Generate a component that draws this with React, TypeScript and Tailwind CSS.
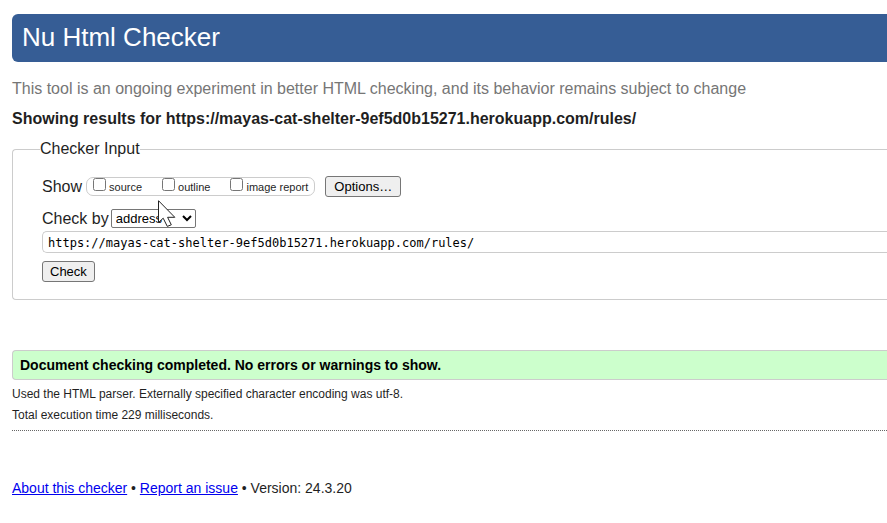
import { useState } from "react";

const REPORTS = [
  { id: "source", label: "source" },
  { id: "outline", label: "outline" },
  { id: "imagereport", label: "image report" },
];

const BUTTON =
  "h-[21px] rounded-[3px] border border-[#767676] bg-[#efefef] px-[7px] text-[13px] leading-[19px] text-black";

function Pointer() {
  return (
    <svg
      className="pointer-events-none absolute -top-[9px] left-[47px]"
      width="18"
      height="28"
      viewBox="0 0 18 28"
      aria-hidden="true"
    >
      <path
        d="M0.5 0.7V22.5L5.2 18.2L9.3 26.4L13.3 24.8L9.6 17.3H16.8Z"
        fill="#fff"
        stroke="#222"
        strokeWidth="1"
      />
    </svg>
  );
}

function CheckerForm() {
  const [address, setAddress] = useState("https://mayas-cat-shelter-9ef5d0b15271.herokuapp.com/rules/");
  return (
    <form onSubmit={(event) => event.preventDefault()}>
      <fieldset className="mt-2.5 rounded-l-[4px] border border-r-0 border-[#ccc] pb-[17px] pl-[29px]">
        <legend className="-ml-[2px] text-[16px] leading-[20px]">Checker Input</legend>
        <div className="mt-[17px] flex h-[21px] items-center">
          <span className="mr-1 text-[16px] leading-[20px]">Show</span>
          <div className="mr-2.5 flex h-[19px] gap-5 rounded-[7px] border border-[#ccc] pr-[6px] pl-[6px]">
            {REPORTS.map(({ id, label }) => (
              <div key={id} className="flex gap-[3px]">
                <input type="checkbox" id={id} className="size-[13px]" />
                <label htmlFor={id} className="text-[11px] leading-[18px]">
                  {label}
                </label>
              </div>
            ))}
          </div>
          <button type="button" className={`${BUTTON} min-w-[76px]`}>
            Options…
          </button>
        </div>
        <div className="mt-3 flex h-[19px] items-center">
          <label htmlFor="docselect" className="mr-[2px] text-[16px] leading-[20px]">
            Check by
          </label>
          <div className="relative">
            <select
              id="docselect"
              defaultValue="address"
              className="block h-[19px] w-[85px] rounded-[2px] border border-[#767676] bg-white text-[13px] leading-[17px] text-black"
            >
              <option value="address">address</option>
              <option value="file">file upload</option>
              <option value="textarea">text input</option>
            </select>
            <Pointer />
          </div>
        </div>
        <input
          type="url"
          aria-label="Address"
          value={address}
          onChange={(event) => setAddress(event.target.value)}
          className="mt-[3px] block h-[22px] w-full rounded-l-[5px] border border-r-0 border-[#ccc] px-[5px] pt-[2px] font-['DejaVu_Sans_Mono',monospace] text-[12px] leading-[18px] text-black"
        />
        <button type="submit" className={`${BUTTON} mt-2 block`}>
          Check
        </button>
      </fieldset>
    </form>
  );
}

export default function App() {
  return (
    <div className="min-h-screen bg-white pt-3.5 pl-3 font-['Liberation_Sans',Arial,sans-serif] text-[#1f1f1f]">
      <header>
        <h1 className="rounded-l-[6px] bg-[#365d95] pt-[7px] pb-[9px] pl-[10px] text-[26px] leading-[32px] text-white">
          Nu Html Checker
        </h1>
        <p className="mt-[17px] text-[16px] leading-[20px] text-[#767676]">
          This tool is an ongoing experiment in better HTML checking, and its behavior remains subject to change
        </p>
      </header>
      <main>
        <h2 className="mt-2.5 text-[16px] leading-[20px] font-bold">
          Showing results for https://mayas-cat-shelter-9ef5d0b15271.herokuapp.com/rules/
        </h2>
        <CheckerForm />
        <section className="mt-[50px] border-b border-dotted border-[#666] pb-1">
          <p className="rounded-l-[4px] border border-r-0 border-[#ccc] bg-[#cfc] py-1 pl-[7px] text-[14px] leading-[20px] font-bold text-black">
            Document checking completed. No errors or warnings to show.
          </p>
          <p className="mt-1 text-[12px] leading-[21px]">
            Used the HTML parser. Externally specified character encoding was utf-8.
          </p>
          <p className="text-[12px] leading-[21px]">Total execution time 229 milliseconds.</p>
        </section>
      </main>
      <footer className="mt-[47px] text-[14px] leading-[20px]">
        <a href="#about" className="text-[#0000ee] underline">
          About this checker
        </a>{" "}
        •{" "}
        <a href="#issues" className="text-[#0000ee] underline">
          Report an issue
        </a>{" "}
        • Version: 24.3.20
      </footer>
    </div>
  );
}
